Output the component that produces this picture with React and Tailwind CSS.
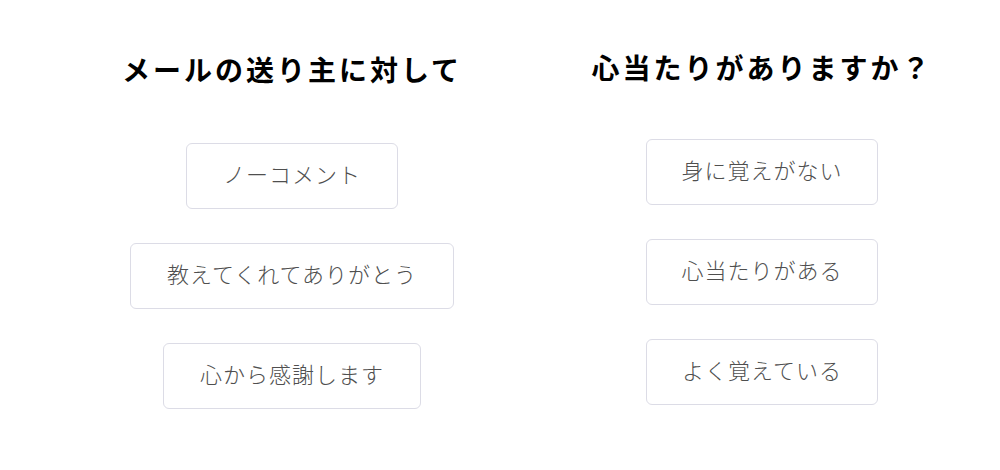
import React from 'react';

const left = ['ノーコメント', '教えてくれてありがとう', '心から感謝します'];
const right = ['身に覚えがない', '心当たりがある', 'よく覚えている'];

function Choice({ label, fixed }) {
    return (
        <button
            className={
                'h-[66px] pb-[5px] rounded-[6px] border border-[#dcdce6] bg-white text-[22px] font-light tracking-[1px] text-[#4f4f4f] ' +
                (fixed ? 'w-[232px]' : 'px-[36px]')
            }
        >
            {label}
        </button>
    );
}

export default function App() {
    const font = { fontFamily: '"Noto Sans CJK JP", "Noto Sans", sans-serif' };
    return (
        <div className="w-[1000px] h-[470px] bg-white" style={font}>
            <div className="flex pl-[57px]">
                <div className="w-[470px] flex flex-col items-center pt-[51px]">
                    <h2 className="text-[28px] font-bold tracking-[3px] leading-[36px] text-black">
                        メールの送り主に対して
                    </h2>
                    <div className="flex flex-col items-center gap-[34px] mt-[56px]">
                        {left.map((l) => (
                            <Choice key={l} label={l} />
                        ))}
                    </div>
                </div>
                <div className="w-[470px] flex flex-col items-center pt-[49px]">
                    <h2 className="text-[28px] font-bold tracking-[3px] leading-[36px] text-black">
                        心当たりがありますか？
                    </h2>
                    <div className="flex flex-col items-center gap-[34px] mt-[54px]">
                        {right.map((r) => (
                            <Choice key={r} label={r} fixed />
                        ))}
                    </div>
                </div>
            </div>
        </div>
    );
}
